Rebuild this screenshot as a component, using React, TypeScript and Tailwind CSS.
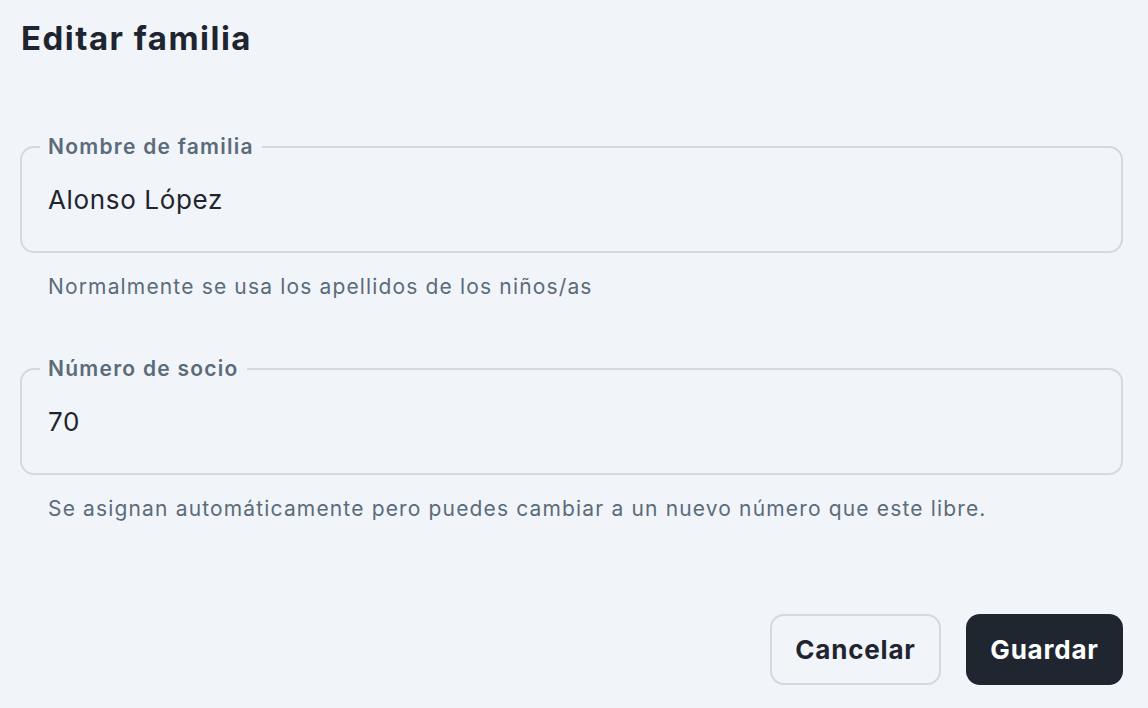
import React from "react";

function Field({ label, value, help }: { label: string; value: string; help: string }) {
  return (
    <div className="flex flex-col">
      <fieldset className="border-2 border-[#d3d9df] rounded-[14px] px-[18px] pb-[28px]">
        <legend className="px-2 text-[21px] leading-[28px] font-semibold tracking-[0.06em] text-[#5b6b7a]">{label}</legend>
        <div className="mt-[14px] h-[48px] px-2 flex items-center text-[26px] tracking-[0.025em] text-[#1e2530]">{value}</div>
      </fieldset>
      <p className="mt-[20px] pl-[28px] text-[21px] leading-[28px] tracking-[0.055em] text-[#5b6b7a]">{help}</p>
    </div>
  );
}

export default function App() {
  return (
    <div
      className="w-[1148px] h-[708px] bg-[#f1f5f9] pl-[20px] pr-[25px] pt-[16px] flex flex-col"
      style={{ fontFamily: "Inter, 'Noto Sans', sans-serif" }}
    >
      <h1 className="text-[33px] leading-[44px] font-bold tracking-[0.045em] text-[#1e2530] pl-[1px]">Editar familia</h1>
      <div className="mt-[73px] flex flex-col gap-[54px]">
        <Field label="Nombre de familia" value="Alonso López" help="Normalmente se usa los apellidos de los niños/as" />
        <Field
          label="Número de socio"
          value="70"
          help="Se asignan automáticamente pero puedes cambiar a un nuevo número que este libre."
        />
      </div>
      <div className="mt-[91px] flex justify-end gap-[25px]">
        <button className="h-[71px] w-[171px] rounded-[14px] border-2 border-[#d3d9df] text-[26px] font-bold tracking-[0.03em] text-[#1e2530]">
          Cancelar
        </button>
        <button className="h-[71px] w-[157px] rounded-[14px] bg-[#1f2630] text-[26px] font-bold tracking-[0.03em] text-white">
          Guardar
        </button>
      </div>
    </div>
  );
}
